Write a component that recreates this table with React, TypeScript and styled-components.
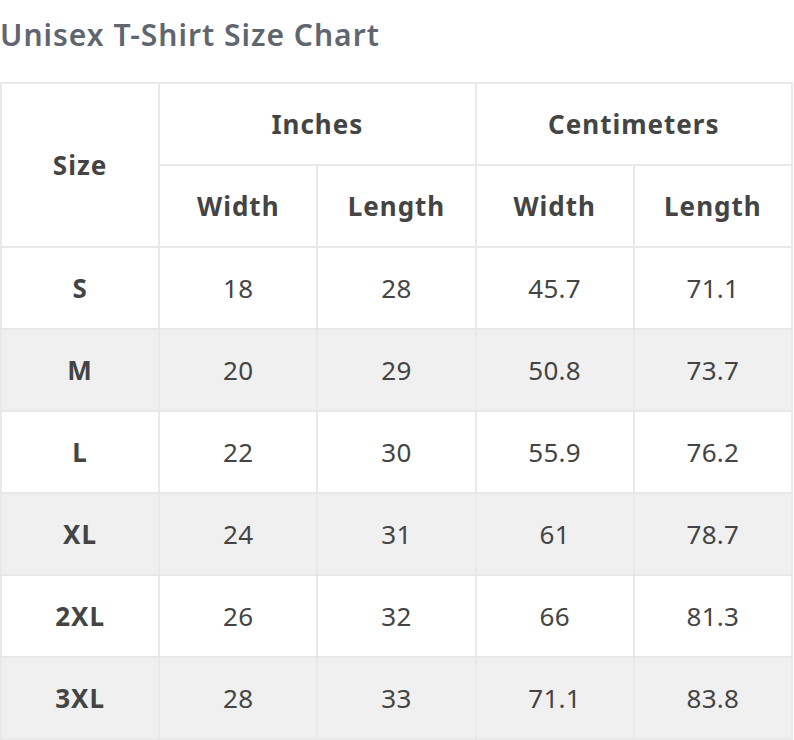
import styled, { createGlobalStyle } from "styled-components";

const GlobalStyle = createGlobalStyle`
  body {
    margin: 0;
    background: #ffffff;
    font-family: "Noto Sans", "Open Sans", sans-serif;
  }
`;

const Page = styled.div`
  width: 794px;
  padding-top: 17px;
`;

const Title = styled.h2`
  margin: 0 0 29px 0;
  font-size: 30px;
  line-height: 36px;
  font-weight: 600;
  color: #5f6670;
  letter-spacing: 1px;
`;

const Table = styled.table`
  width: 793px;
  border-collapse: collapse;
  table-layout: fixed;
  color: #444444;
`;

const Row = styled.tr<{ shaded?: boolean }>`
  height: 82px;
  background: ${({ shaded }) => (shaded ? "#f0f0f0" : "#ffffff")};
`;

const HeadCell = styled.th`
  border: 2px solid #e9e9e9;
  font-size: 26px;
  font-weight: 700;
  text-align: center;
  padding: 0;
  letter-spacing: 1px;
`;

const Cell = styled.td<{ bold?: boolean }>`
  border: 2px solid #e9e9e9;
  font-size: 26px;
  font-weight: ${({ bold }) => (bold ? 700 : 400)};
  letter-spacing: ${({ bold }) => (bold ? "1px" : "0.3px")};
  text-align: center;
  padding: 0;
`;

const rows = [
  ["S", "18", "28", "45.7", "71.1"],
  ["M", "20", "29", "50.8", "73.7"],
  ["L", "22", "30", "55.9", "76.2"],
  ["XL", "24", "31", "61", "78.7"],
  ["2XL", "26", "32", "66", "81.3"],
  ["3XL", "28", "33", "71.1", "83.8"],
];

const App = () => {
  return (
    <Page>
      <GlobalStyle />
      <Title>Unisex T-Shirt Size Chart</Title>
      <Table>
        <thead>
          <Row>
            <HeadCell rowSpan={2}>Size</HeadCell>
            <HeadCell colSpan={2}>Inches</HeadCell>
            <HeadCell colSpan={2}>Centimeters</HeadCell>
          </Row>
          <Row>
            <HeadCell>Width</HeadCell>
            <HeadCell>Length</HeadCell>
            <HeadCell>Width</HeadCell>
            <HeadCell>Length</HeadCell>
          </Row>
        </thead>
        <tbody>
          {rows.map(([size, ...values], i) => (
            <Row key={size} shaded={i % 2 === 1}>
              <Cell bold>{size}</Cell>
              {values.map((v, j) => (
                <Cell key={j}>{v}</Cell>
              ))}
            </Row>
          ))}
        </tbody>
      </Table>
    </Page>
  );
};

export default App;
